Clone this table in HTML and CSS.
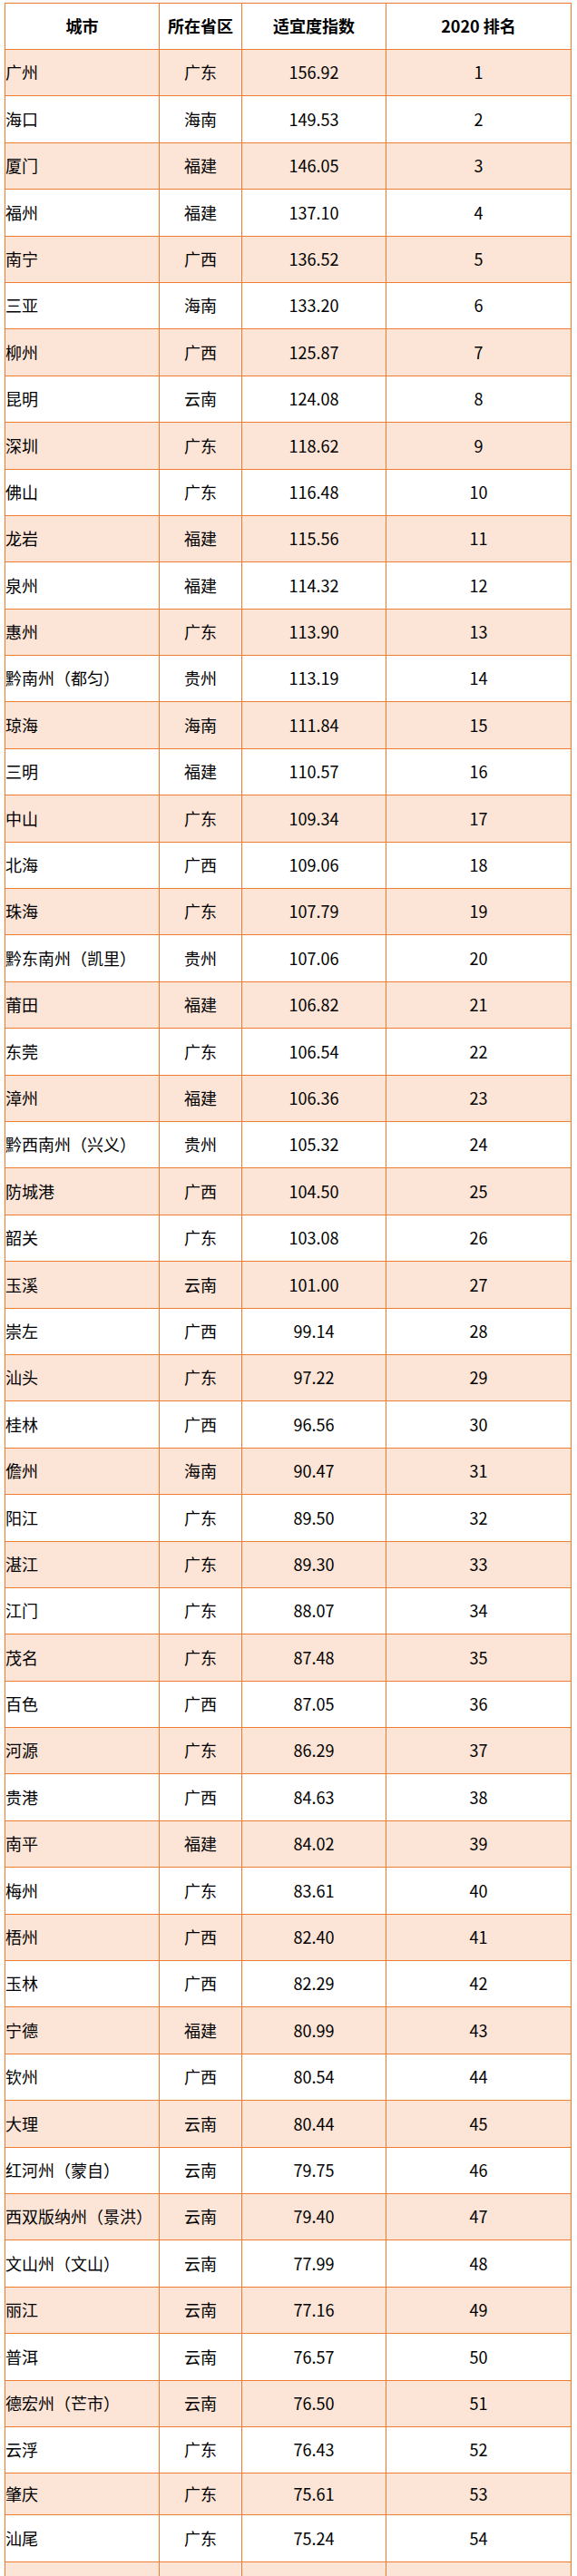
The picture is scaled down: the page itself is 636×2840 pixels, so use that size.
FILE: index.html
```html
<!DOCTYPE html>
<html lang="zh-CN">
<head>
<meta charset="utf-8">
<title>城市适宜度指数</title>
<link rel="stylesheet" href="styles.css">
</head>
<body>
<table class="rank">
  <colgroup>
    <col class="c-city">
    <col class="c-prov">
    <col class="c-index">
    <col class="c-rank">
  </colgroup>
  <thead>
    <tr class="head"><th>城市</th><th>所在省区</th><th>适宜度指数</th><th>2020 排名</th></tr>
  </thead>
  <tbody>
    <tr class="odd"><td>广州</td><td>广东</td><td>156.92</td><td>1</td></tr>
    <tr><td>海口</td><td>海南</td><td>149.53</td><td>2</td></tr>
    <tr class="odd"><td>厦门</td><td>福建</td><td>146.05</td><td>3</td></tr>
    <tr><td>福州</td><td>福建</td><td>137.10</td><td>4</td></tr>
    <tr class="odd"><td>南宁</td><td>广西</td><td>136.52</td><td>5</td></tr>
    <tr><td>三亚</td><td>海南</td><td>133.20</td><td>6</td></tr>
    <tr class="odd"><td>柳州</td><td>广西</td><td>125.87</td><td>7</td></tr>
    <tr><td>昆明</td><td>云南</td><td>124.08</td><td>8</td></tr>
    <tr class="odd"><td>深圳</td><td>广东</td><td>118.62</td><td>9</td></tr>
    <tr><td>佛山</td><td>广东</td><td>116.48</td><td>10</td></tr>
    <tr class="odd"><td>龙岩</td><td>福建</td><td>115.56</td><td>11</td></tr>
    <tr><td>泉州</td><td>福建</td><td>114.32</td><td>12</td></tr>
    <tr class="odd"><td>惠州</td><td>广东</td><td>113.90</td><td>13</td></tr>
    <tr><td>黔南州（都匀）</td><td>贵州</td><td>113.19</td><td>14</td></tr>
    <tr class="odd"><td>琼海</td><td>海南</td><td>111.84</td><td>15</td></tr>
    <tr><td>三明</td><td>福建</td><td>110.57</td><td>16</td></tr>
    <tr class="odd"><td>中山</td><td>广东</td><td>109.34</td><td>17</td></tr>
    <tr><td>北海</td><td>广西</td><td>109.06</td><td>18</td></tr>
    <tr class="odd"><td>珠海</td><td>广东</td><td>107.79</td><td>19</td></tr>
    <tr><td>黔东南州（凯里）</td><td>贵州</td><td>107.06</td><td>20</td></tr>
    <tr class="odd"><td>莆田</td><td>福建</td><td>106.82</td><td>21</td></tr>
    <tr><td>东莞</td><td>广东</td><td>106.54</td><td>22</td></tr>
    <tr class="odd"><td>漳州</td><td>福建</td><td>106.36</td><td>23</td></tr>
    <tr><td>黔西南州（兴义）</td><td>贵州</td><td>105.32</td><td>24</td></tr>
    <tr class="odd"><td>防城港</td><td>广西</td><td>104.50</td><td>25</td></tr>
    <tr><td>韶关</td><td>广东</td><td>103.08</td><td>26</td></tr>
    <tr class="odd"><td>玉溪</td><td>云南</td><td>101.00</td><td>27</td></tr>
    <tr><td>崇左</td><td>广西</td><td>99.14</td><td>28</td></tr>
    <tr class="odd"><td>汕头</td><td>广东</td><td>97.22</td><td>29</td></tr>
    <tr><td>桂林</td><td>广西</td><td>96.56</td><td>30</td></tr>
    <tr class="odd"><td>儋州</td><td>海南</td><td>90.47</td><td>31</td></tr>
    <tr><td>阳江</td><td>广东</td><td>89.50</td><td>32</td></tr>
    <tr class="odd"><td>湛江</td><td>广东</td><td>89.30</td><td>33</td></tr>
    <tr><td>江门</td><td>广东</td><td>88.07</td><td>34</td></tr>
    <tr class="odd"><td>茂名</td><td>广东</td><td>87.48</td><td>35</td></tr>
    <tr><td>百色</td><td>广西</td><td>87.05</td><td>36</td></tr>
    <tr class="odd"><td>河源</td><td>广东</td><td>86.29</td><td>37</td></tr>
    <tr><td>贵港</td><td>广西</td><td>84.63</td><td>38</td></tr>
    <tr class="odd"><td>南平</td><td>福建</td><td>84.02</td><td>39</td></tr>
    <tr><td>梅州</td><td>广东</td><td>83.61</td><td>40</td></tr>
    <tr class="odd"><td>梧州</td><td>广西</td><td>82.40</td><td>41</td></tr>
    <tr><td>玉林</td><td>广西</td><td>82.29</td><td>42</td></tr>
    <tr class="odd"><td>宁德</td><td>福建</td><td>80.99</td><td>43</td></tr>
    <tr><td>钦州</td><td>广西</td><td>80.54</td><td>44</td></tr>
    <tr class="odd"><td>大理</td><td>云南</td><td>80.44</td><td>45</td></tr>
    <tr><td>红河州（蒙自）</td><td>云南</td><td>79.75</td><td>46</td></tr>
    <tr class="odd"><td>西双版纳州（景洪）</td><td>云南</td><td>79.40</td><td>47</td></tr>
    <tr><td>文山州（文山）</td><td>云南</td><td>77.99</td><td>48</td></tr>
    <tr class="odd"><td>丽江</td><td>云南</td><td>77.16</td><td>49</td></tr>
    <tr><td>普洱</td><td>云南</td><td>76.57</td><td>50</td></tr>
    <tr class="odd"><td>德宏州（芒市）</td><td>云南</td><td>76.50</td><td>51</td></tr>
    <tr><td>云浮</td><td>广东</td><td>76.43</td><td>52</td></tr>
    <tr class="odd short"><td>肇庆</td><td>广东</td><td>75.61</td><td>53</td></tr>
    <tr><td>汕尾</td><td>广东</td><td>75.24</td><td>54</td></tr>
    <tr class="odd"><td></td><td></td><td></td><td></td></tr>
  </tbody>
</table>
</body>
</html>
```

FILE: styles.css
```css
html, body {
  margin: 0;
  padding: 0;
  background: #ffffff;
}

body {
  padding: 3px 0 0 5px;
  font-family: "Noto Sans CJK SC", "Noto Sans", sans-serif;
  font-size: 18px;
  color: #000000;
}

.rank {
  border-collapse: collapse;
  table-layout: fixed;
  width: 625px;
  box-shadow: 0 -2px 4px rgba(0, 0, 0, 0.06);
}

.c-city { width: 170px; }
.c-prov { width: 91px; }
.c-index { width: 159px; }
.c-rank { width: 204px; }

.rank th,
.rank td {
  border: 1px solid #ed7d31;
  padding: 0;
  line-height: 1.2;
  vertical-align: middle;
  text-align: center;
  white-space: nowrap;
}

.rank th {
  font-weight: 700;
}

.rank td:first-child {
  text-align: left;
  padding-left: 0;
}

.head {
  height: 51px;
}

.rank tbody tr {
  height: 51.4px;
  background: #ffffff;
}

.rank tbody tr.odd {
  background: #fce4d6;
}

.rank tbody tr.short {
  height: 46px;
}
```
